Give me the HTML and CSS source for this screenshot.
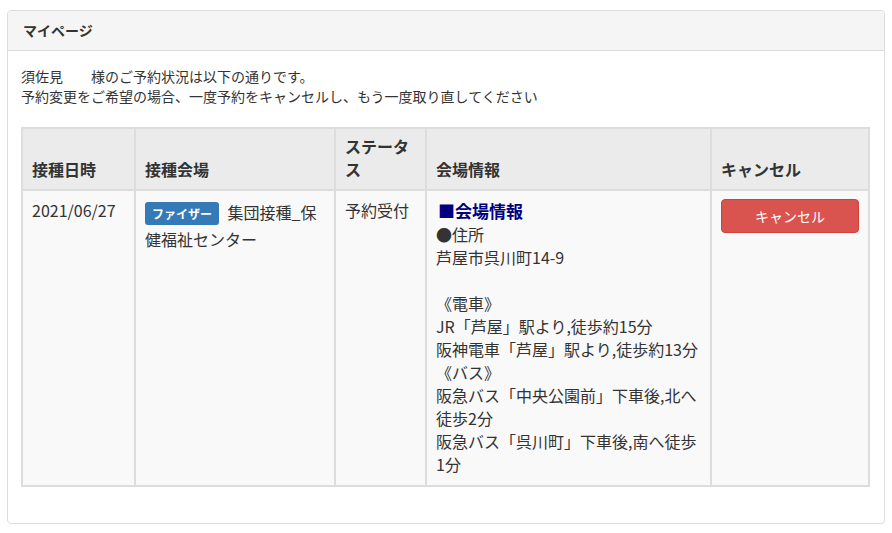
FILE: index.html
```html
<!DOCTYPE html>
<html lang="ja">
<head>
  <meta charset="UTF-8">
  <meta name="viewport" content="width=device-width, initial-scale=1.0">
  <title>マイページ</title>
  <link rel="stylesheet" href="styles.css">
</head>
<body>

  <div class="panel">
    <div class="panel-heading">マイページ</div>
    <div class="panel-body">
      <p class="intro">
        須佐見　　様のご予約状況は以下の通りです。<br>
        予約変更をご希望の場合、一度予約をキャンセルし、もう一度取り直してください
      </p>

      <table class="reserve-table">
        <colgroup>
          <col style="width: 113px">
          <col style="width: 200px">
          <col style="width: 91px">
          <col style="width: 285px">
          <col style="width: 158px">
        </colgroup>
        <thead>
          <tr>
            <th>接種日時</th>
            <th>接種会場</th>
            <th>ステータス</th>
            <th>会場情報</th>
            <th>キャンセル</th>
          </tr>
        </thead>
        <tbody>
          <tr>
            <td>2021/06/27</td>
            <td><span class="label">ファイザー</span> 集団接種_保健福祉センター</td>
            <td>予約受付</td>
            <td class="info">
              <div class="info-title">■会場情報</div>
              ●住所<br>
              芦屋市呉川町14-9<br>
              <br>
              《電車》<br>
              JR「芦屋」駅より,徒歩約15分<br>
              阪神電車「芦屋」駅より,徒歩約13分<br>
              《バス》<br>
              阪急バス「中央公園前」下車後,北へ<br>徒歩2分<br>
              阪急バス「呉川町」下車後,南へ徒歩<br>1分
            </td>
            <td><button class="btn-cancel">キャンセル</button></td>
          </tr>
        </tbody>
      </table>
    </div>
  </div>

</body>
</html>
```

FILE: styles.css
```css
* {
  box-sizing: border-box;
}

body {
  margin: 10px 7px 0;
  font-family: "Noto Sans CJK JP", "Noto Sans", sans-serif;
  font-size: 14px;
  line-height: 20px;
  color: #333;
  background: #fff;
}

.panel {
  border: 1px solid #ddd;
  border-radius: 4px;
  background: #fff;
}

.panel-heading {
  background: #f5f5f5;
  border-bottom: 1px solid #ddd;
  padding: 9px 15px 10px;
  font-size: 14px;
  font-weight: bold;
  border-radius: 4px 4px 0 0;
}

.panel-body {
  padding: 15px 14px 16px 13px;
}

.intro {
  margin: 0 0 21px;
}

.reserve-table {
  width: 100%;
  table-layout: fixed;
  border-collapse: collapse;
  border: 2px solid #ddd;
  margin-bottom: 20px;
  font-size: 16px;
  line-height: 23px;
}

.reserve-table th,
.reserve-table td {
  border: 2px solid #ddd;
  padding: 8px 9px 9px;
  text-align: left;
}

.reserve-table th {
  background: #ebebeb;
  vertical-align: bottom;
  font-weight: bold;
  padding-top: 6px;
  padding-bottom: 8px;
}

.reserve-table td {
  background: #f9f9f9;
  vertical-align: top;
}

.label {
  display: inline-block;
  background: #337ab7;
  color: #fff;
  font-size: 12px;
  font-weight: bold;
  line-height: 15px;
  padding: 4px 7px;
  border-radius: 3px;
  margin: 3px 5px 3px 0;
}

.info {
  white-space: nowrap;
}

.info-title {
  color: #000080;
  font-weight: bold;
  font-size: 17px;
  line-height: 24px;
  padding-left: 2px;
}

.btn-cancel {
  display: block;
  width: 100%;
  background: #d9534f;
  border: 1px solid #d43f3a;
  border-radius: 4px;
  color: #fff;
  font-family: inherit;
  font-size: 14px;
  line-height: 20px;
  padding: 6px 12px;
  cursor: pointer;
}
```
